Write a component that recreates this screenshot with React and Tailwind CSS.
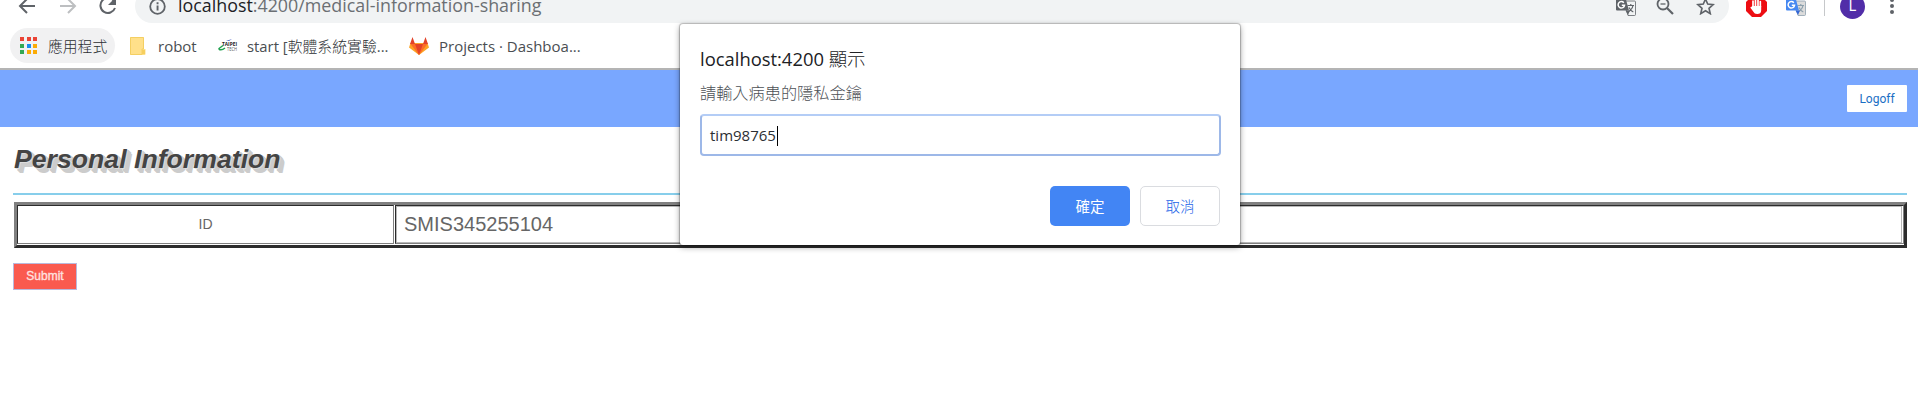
import React from "react";

const shadow =
  "[text-shadow:1px_1px_#ddd,2px_1px_#ccc,3px_2px_#ccc,3px_3px_#ccc,4px_3px_#ccc,4px_4px_#ccc,5px_5px_#ccc]";

function BackIcon({ className }) {
  return (
    <svg className={className} width="18" height="16" viewBox="0 0 18 16" fill="none" stroke="currentColor" strokeWidth="2">
      <path d="M17 8H2M9 1L2 8l7 7" />
    </svg>
  );
}

function TranslateIcon({ back, front, ink, tail }) {
  return (
    <svg width="20" height="20" viewBox="0 0 20 20">
      <path d="M8 5h10.500a1 1 0 0 1 1 1v12.500a1 1 0 0 1-1 1H12z" fill={back} stroke={ink} strokeWidth=".8" />
      <path d="M11.500 9.500h6.500M14.800 8v1.500M17 9.500c-.6 3-2.500 5-5 6.500M13 11.500c1 2 2.300 3.500 4.300 4.500" fill="none" stroke={ink} strokeWidth="1.200" />
      <path d="M1 0h8l4 14.500H1a1 1 0 0 1-1-1V1a1 1 0 0 1 1-1z" fill={front} />
      <path d="M9.500 14.500H14L12 19z" fill={tail} />
      <path d="M7.800 6.700A3.200 3.200 0 1 0 8.500 9.300H5.800" fill="none" stroke="#fff" strokeWidth="1.500" />
    </svg>
  );
}

function Toolbar() {
  return (
    <div className="flex h-[23px] items-end overflow-hidden bg-white">
      <div className="flex h-[34px] w-full shrink-0 items-center">
        <BackIcon className="ml-[18px] shrink-0 text-[#5f6368]" />
        <BackIcon className="ml-[23px] shrink-0 rotate-180 text-[#bdbfc1]" />
        <svg className="ml-[22px] shrink-0" width="18" height="18" viewBox="0 0 18 18">
          <path d="M15 4A7.500 7.500 0 1 0 16 11" fill="none" stroke="#5f6368" strokeWidth="2" />
          <path d="M17 0v8H9z" fill="#5f6368" />
        </svg>
        <div className="ml-[18px] flex h-[34px] w-[1594px] shrink-0 items-center rounded-full bg-[#f1f3f4]">
          <svg className="ml-[14px]" width="17" height="17" viewBox="0 0 17 17">
            <circle cx="8.500" cy="8.500" r="7.300" fill="none" stroke="#5f6368" strokeWidth="1.800" />
            <path d="M7.600 7.600h1.900v5H7.600zM7.600 4.300h1.900v1.900H7.600z" fill="#5f6368" />
          </svg>
          <span className="ml-3 whitespace-nowrap pb-[2px] text-[17.850px] leading-[32px] text-[#6b6f73]">
            <span className="text-[#202124]">localhost</span>:4200/medical-information-sharing
          </span>
          <div className="ml-auto mr-[14px] flex items-center">
            <TranslateIcon back="#f1f3f4" front="#5f6368" ink="#5f6368" tail="#5f6368" />
            <svg className="ml-[20px]" width="18" height="18" viewBox="0 0 18 18" fill="none" stroke="#5f6368">
              <circle cx="7" cy="7" r="5.500" strokeWidth="1.800" />
              <path d="M4.500 7h5" strokeWidth="1.300" />
              <path d="M11 11l6 6" strokeWidth="2.200" />
            </svg>
            <svg className="ml-[22px]" width="19" height="18" viewBox="0 0 19 18" fill="none" stroke="#5f6368" strokeWidth="1.600">
              <path d="M9.500 2l2.200 5.100 5.500.5-4.200 3.700 1.300 5.400-4.800-2.900-4.800 2.900 1.300-5.400L1.800 7.600l5.500-.5z" />
            </svg>
          </div>
        </div>
        <svg className="ml-[17px] shrink-0" width="21" height="21" viewBox="0 0 21 21">
          <path d="M6 0h9l6 6v9l-6 6H6l-6-6V6z" fill="#ed0d12" />
          <path d="M7 12V5M9.500 10V3M12 10V3.500M14.300 11V5.500" stroke="#fff" strokeWidth="1.700" strokeLinecap="round" />
          <path d="M6.200 10h9v4c0 3-1.500 4-4 4-2 0-3-.8-4-2.500l-3-4 1-.5z" fill="#fff" />
        </svg>
        <span className="ml-[19px] shrink-0">
          <TranslateIcon back="#dcdcdc" front="#4688f1" ink="#8da0ad" tail="#3367d6" />
        </span>
        <span className="ml-[18px] h-5 w-px shrink-0 bg-[#c6c8ca]" />
        <span className="ml-[15px] flex size-[25px] shrink-0 items-center justify-center rounded-full bg-[#512da8] font-[Roboto] text-[14px] leading-none text-white">
          L
        </span>
        <svg className="ml-[25px] shrink-0" width="4" height="18" viewBox="0 0 4 18" fill="#5f6368">
          <circle cx="2" cy="3" r="2" />
          <circle cx="2" cy="9" r="2" />
          <circle cx="2" cy="15" r="2" />
        </svg>
      </div>
    </div>
  );
}

const dots = ["#ea4335", "#ea4335", "#ea4335", "#34a853", "#1a8cf0", "#fbab05", "#34a853", "#fbab05", "#fbab05"];

function Bookmarks() {
  return (
    <div className="flex h-[45px] items-center whitespace-nowrap bg-white text-[15px] text-[#4a4e52]">
      <div className="ml-[10px] flex h-[35px] w-[105px] items-center rounded-full bg-[#f1f1f2] pl-[10px]">
        <span className="grid grid-cols-3 gap-[2.500px]">
          {dots.map((c, i) => (
            <span key={i} className="size-[4px]" style={{ background: c }} />
          ))}
        </span>
        <span className="ml-[11px] pt-[2px] text-[14.800px] font-light text-[#2c2f33]">應用程式</span>
      </div>
      <svg className="ml-[15px]" width="16" height="18" viewBox="0 0 16 18">
        <path d="M1 0h12a1 1 0 0 1 1 1v11h1.500v5a1 1 0 0 1-1 1H1a1 1 0 0 1-1-1V1a1 1 0 0 1 1-1z" fill="#ffe08a" />
        <path d="M.5.500h13v11.500h-1.500v5.500H.5z" fill="none" stroke="#f4cf62" />
        <path d="M12 13h3v4h-3z" fill="#f6cf5f" />
      </svg>
      <span className="ml-3 w-[39px] pt-[2px]">robot</span>
      <svg className="ml-[21px]" width="20" height="13" viewBox="0 0 20 13">
        <path d="M8 2l6-2-3 2z" fill="#4a5fc0" />
        <text x="4" y="7" fontSize="5" fontWeight="700" fill="#222" textLength="15" lengthAdjust="spacingAndGlyphs">TAIPEI</text>
        <text x="9" y="12" fontSize="5" fill="#555" textLength="10" lengthAdjust="spacingAndGlyphs">TECH</text>
        <path d="M5 6.500L1 9.500c0 2 3 1.800 6-.5" fill="none" stroke="#1fa04e" strokeWidth="1.500" />
      </svg>
      <span className="ml-[9px] w-[142px] pt-[2px] text-[14.850px]">
        start [<span className="font-light text-[#2c2f33]">軟體系統實驗</span>...
      </span>
      <svg className="ml-[20px]" width="20" height="18" viewBox="0 0 20 18">
        <path d="M10 18L0 10.500 1.500 6h17l1.500 4.500z" fill="#fca326" />
        <path d="M10 18L1.500 7h17z" fill="#fc6d26" />
        <path d="M10 18L6 7h8z" fill="#e24329" />
        <path d="M3.500 0L6 7H1zM16.500 0L19 7h-5z" fill="#e24329" />
      </svg>
      <span className="ml-[10px] pt-[2px]">Projects · Dashboa...</span>
    </div>
  );
}

function Prompt() {
  return (
    <div className="absolute left-[680px] top-[24px] flex h-[221px] w-[560px] flex-col rounded-[3px] bg-white px-5 shadow-[0_0_1px_1px_rgba(0,0,0,0.22),0_2px_6px_rgba(0,0,0,0.4)]">
      <div className="mt-[21px] h-[28px] whitespace-nowrap text-[18.400px] leading-[28px] text-[#202124]">
        localhost:4200 <span className="font-light">顯示</span>
      </div>
      <div className="mt-[8px] h-[24px] whitespace-nowrap text-[16.200px] font-light leading-[24px] text-[#4d5156]">請輸入病患的隱私金鑰</div>
      <div className="mt-[9px] flex h-[42px] w-[521px] items-center rounded-[4px] border-2 border-[#9db8e8] border-t-[#b4cdf6] pl-2 pt-px text-[15px] text-[#2c2f33]">
        <span>tim98765</span>
        <span className="ml-px h-5 w-px bg-black" />
      </div>
      <div className="mt-[30px] flex justify-end gap-[10px] text-[14.500px]">
        <span className="flex h-10 w-20 items-center justify-center rounded-[5px] bg-[#4285f4] pt-px text-white">確定</span>
        <span className="flex h-10 w-20 items-center justify-center rounded-[5px] border border-[#dadce0] pt-px font-light text-[#1a63e8]">取消</span>
      </div>
    </div>
  );
}

export default function App() {
  return (
    <div className="relative h-[409px] w-[1918px] overflow-hidden bg-white font-['Open_Sans','Noto_Sans_CJK_TC',sans-serif]">
      <Toolbar />
      <Bookmarks />
      <header className="flex h-[59px] items-center justify-end border-t-2 border-[#b4b4b4] bg-[#79a7ff] pr-[11px]">
        <button className="h-[27px] w-[60px] rounded-[1px] bg-white font-[Roboto] text-[12px] text-[#1a6fc4]">Logoff</button>
      </header>
      <main className="flex flex-col items-start pl-[13px] pr-[11px] font-['Liberation_Sans',sans-serif]">
        <h1 className={"ml-px mt-[16px] h-[32px] whitespace-nowrap text-[26.667px] font-bold italic leading-[32px] text-[#444] " + shadow}>
          Personal Information
        </h1>
        <div className="mt-[18px] h-[2px] w-full bg-[#87ceeb]" />
        <div className="ml-px mt-[7px] flex h-[46px] w-[1893px] gap-px border-[3px] border-b-[#2c2c2c] border-l-[#808080] border-r-[#2c2c2c] border-t-[#808080] pb-px">
          <div className="flex w-[377px] items-center justify-center border border-b-[#808080] border-l-[#2c2c2c] border-r-[#808080] border-t-[#2c2c2c] text-[14px] text-[#666]">
            ID
          </div>
          <div className="flex flex-1 border border-b-[#808080] border-l-[#2c2c2c] border-r-[#808080] border-t-[#2c2c2c] pr-px">
            <div className="flex flex-1 items-center border border-[#b8b8b8] pb-[2px] pl-[7px] text-[20px] text-[#666]">SMIS345255104</div>
          </div>
        </div>
        <button className="mt-[15px] h-[27px] w-[64px] border border-[#b9b9dc] bg-[#fa5a4f] pb-[2px] text-[12px] text-[#ffe3e0] [-webkit-text-stroke:0.3px_#ffe3e0]">Submit</button>
      </main>
      <Prompt />
    </div>
  );
}
